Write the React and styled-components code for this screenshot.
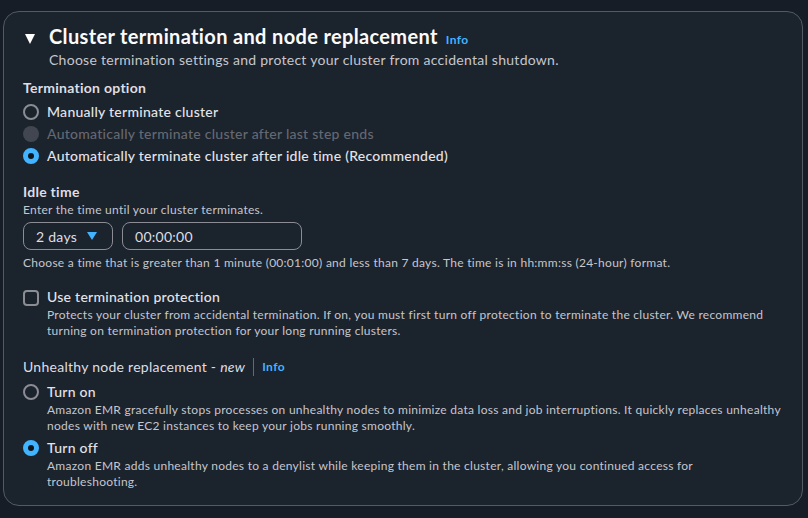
import React from "react";
import styled, { createGlobalStyle } from "styled-components";

const GlobalStyle = createGlobalStyle`
  body {
    margin: 0;
    background: #161d26;
    font-family: Lato, "Open Sans", sans-serif;
    letter-spacing: 0.27px;
    color: #dedee3;
  }
`;

const Page = styled.div`
  padding: 11px 5px 13px 3px;
`;

const Card = styled.section`
  background: #1b232d;
  border: 1px solid #535a66;
  border-radius: 16px;
  padding: 12px 16px 15px 19px;
  min-height: 466px;
`;

const Header = styled.div`
  display: flex;
  align-items: flex-start;
`;

const Caret = styled.span`
  width: 0;
  height: 0;
  margin: 10px 14px 0 2px;
  border-left: 5.5px solid transparent;
  border-right: 5.5px solid transparent;
  border-top: 10px solid #ffffff;
`;

const HeaderText = styled.div`
  display: flex;
  flex-direction: column;
`;

const Title = styled.h2`
  margin: 0;
  font-size: 20px;
  line-height: 24px;
  font-weight: 700;
  letter-spacing: 0.35px;
  color: #fbfbfc;
  display: flex;
  align-items: baseline;
  gap: 8px;
`;

const InfoLink = styled.a`
  color: #42b4ff;
  font-size: 12px;
  font-weight: 700;
  letter-spacing: 0.4px;
  text-decoration: none;
`;

const Description = styled.p`
  margin: -2px 0 0;
  font-size: 14px;
  line-height: 20px;
  color: #c6c6cd;
`;

const Section = styled.div`
  margin-top: ${(p) => p.$gap || 0}px;
  display: flex;
  flex-direction: column;
`;

const Label = styled.div`
  font-size: 14px;
  line-height: 20px;
  font-weight: ${(p) => (p.$plain ? 400 : 700)};
  color: #dedee3;
  display: flex;
  align-items: center;
`;

const Hint = styled.div`
  font-size: 12px;
  line-height: 16px;
  color: #c6c6cd;
  margin-top: ${(p) => p.$top || 0}px;
`;

const OptionList = styled.div`
  display: flex;
  flex-direction: column;
  gap: ${(p) => p.$gap || 2}px;
  margin-top: ${(p) => p.$top || 4}px;
`;

const Option = styled.label`
  display: flex;
  align-items: flex-start;
  gap: 8px;
  min-height: 20px;
`;

const Radio = styled.span`
  box-sizing: border-box;
  flex: none;
  width: 16px;
  height: 16px;
  margin-top: 2px;
  border-radius: 50%;
  border: ${(p) =>
    p.$checked ? "5px solid #42b4ff" : p.$disabled ? "none" : "2px solid #8c8c94"};
  background: ${(p) => (p.$checked ? "#0f141a" : p.$disabled ? "#424650" : "transparent")};
`;

const Checkbox = styled.span`
  box-sizing: border-box;
  flex: none;
  width: 16px;
  height: 16px;
  margin-top: 2.5px;
  border-radius: 4px;
  border: 2px solid #8c8c94;
`;

const OptionBody = styled.div`
  display: flex;
  flex-direction: column;
`;

const OptionText = styled.span`
  font-size: 14px;
  line-height: 20px;
  font-weight: 500;
  color: ${(p) => (p.$disabled ? "#656871" : "#e4e4e9")};
`;

const Controls = styled.div`
  display: flex;
  gap: 9px;
  margin-top: 4px;
`;

const Select = styled.div`
  box-sizing: border-box;
  width: 90px;
  height: 28px;
  border: 1px solid #8c8c94;
  border-radius: 8px;
  padding: 0 12px;
  display: flex;
  align-items: center;
  gap: 10px;
  font-size: 14px;
  color: #dedee3;
`;

const SelectCaret = styled.span`
  width: 0;
  height: 0;
  border-left: 5.5px solid transparent;
  border-right: 5.5px solid transparent;
  border-top: 8px solid #42b4ff;
`;

const Input = styled.div`
  box-sizing: border-box;
  width: 180px;
  height: 28px;
  border: 1px solid #8c8c94;
  border-radius: 8px;
  padding: 0 12px;
  display: flex;
  align-items: center;
  font-size: 14px;
  color: #dedee3;
`;

const Divider = styled.span`
  width: 1px;
  height: 18px;
  background: #656871;
  margin: 0 8px;
`;

export default function App() {
  return (
    <>
      <GlobalStyle />
      <Page>
        <Card>
          <Header>
            <Caret />
            <HeaderText>
              <Title>
                Cluster termination and node replacement
                <InfoLink href="#">Info</InfoLink>
              </Title>
              <Description>
                Choose termination settings and protect your cluster from accidental shutdown.
              </Description>
            </HeaderText>
          </Header>

          <Section $gap={8}>
            <Label>Termination option</Label>
            <OptionList>
              <Option>
                <Radio />
                <OptionText>Manually terminate cluster</OptionText>
              </Option>
              <Option>
                <Radio $disabled />
                <OptionText $disabled>Automatically terminate cluster after last step ends</OptionText>
              </Option>
              <Option>
                <Radio $checked />
                <OptionText>Automatically terminate cluster after idle time (Recommended)</OptionText>
              </Option>
            </OptionList>
          </Section>

          <Section $gap={16}>
            <Label>Idle time</Label>
            <Hint>Enter the time until your cluster terminates.</Hint>
            <Controls>
              <Select>
                2 days
                <SelectCaret />
              </Select>
              <Input>00:00:00</Input>
            </Controls>
            <Hint $top={5}>
              Choose a time that is greater than 1 minute (00:01:00) and less than 7 days. The time is in
              hh:mm:ss (24-hour) format.
            </Hint>
          </Section>

          <Section $gap={16}>
            <Option>
              <Checkbox />
              <OptionBody>
                <OptionText>Use termination protection</OptionText>
                <Hint>
                  Protects your cluster from accidental termination. If on, you must first turn off
                  protection to terminate the cluster. We recommend
                  <br />
                  turning on termination protection for your long running clusters.
                </Hint>
              </OptionBody>
            </Option>
          </Section>

          <Section $gap={18}>
            <Label $plain>
              Unhealthy node replacement -&nbsp;<i>new</i>
              <Divider />
              <InfoLink href="#">Info</InfoLink>
            </Label>
            <OptionList $gap={4} $top={5}>
              <Option>
                <Radio />
                <OptionBody>
                  <OptionText>Turn on</OptionText>
                  <Hint>
                    Amazon EMR gracefully stops processes on unhealthy nodes to minimize data loss and job
                    interruptions. It quickly replaces unhealthy
                    <br />
                    nodes with new EC2 instances to keep your jobs running smoothly.
                  </Hint>
                </OptionBody>
              </Option>
              <Option>
                <Radio $checked />
                <OptionBody>
                  <OptionText>Turn off</OptionText>
                  <Hint>
                    Amazon EMR adds unhealthy nodes to a denylist while keeping them in the cluster,
                    allowing you continued access for
                    <br />
                    troubleshooting.
                  </Hint>
                </OptionBody>
              </Option>
            </OptionList>
          </Section>
        </Card>
      </Page>
    </>
  );
}
